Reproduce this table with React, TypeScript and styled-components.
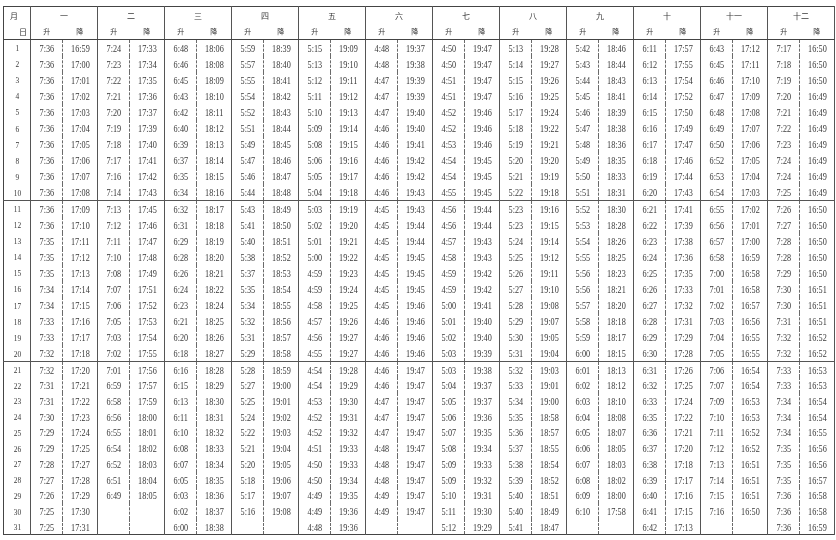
import React from "react";
import styled, { createGlobalStyle } from "styled-components";

const Global = createGlobalStyle`
  html, body { margin: 0; padding: 0; background: #fff; }
`;

const MONTHS = ["一", "二", "三", "四", "五", "六", "七", "八", "九", "十", "十一", "十二"];

const RISE: string[] = [
  "7:36 7:36 7:36 7:36 7:36 7:36 7:36 7:36 7:36 7:36 7:36 7:36 7:35 7:35 7:35 7:34 7:34 7:33 7:33 7:32 7:32 7:31 7:31 7:30 7:29 7:29 7:28 7:27 7:26 7:25 7:25",
  "7:24 7:23 7:22 7:21 7:20 7:19 7:18 7:17 7:16 7:14 7:13 7:12 7:11 7:10 7:08 7:07 7:06 7:05 7:03 7:02 7:01 6:59 6:58 6:56 6:55 6:54 6:52 6:51 6:49",
  "6:48 6:46 6:45 6:43 6:42 6:40 6:39 6:37 6:35 6:34 6:32 6:31 6:29 6:28 6:26 6:24 6:23 6:21 6:20 6:18 6:16 6:15 6:13 6:11 6:10 6:08 6:07 6:05 6:03 6:02 6:00",
  "5:59 5:57 5:55 5:54 5:52 5:51 5:49 5:47 5:46 5:44 5:43 5:41 5:40 5:38 5:37 5:35 5:34 5:32 5:31 5:29 5:28 5:27 5:25 5:24 5:22 5:21 5:20 5:18 5:17 5:16",
  "5:15 5:13 5:12 5:11 5:10 5:09 5:08 5:06 5:05 5:04 5:03 5:02 5:01 5:00 4:59 4:59 4:58 4:57 4:56 4:55 4:54 4:54 4:53 4:52 4:52 4:51 4:50 4:50 4:49 4:49 4:48",
  "4:48 4:48 4:47 4:47 4:47 4:46 4:46 4:46 4:46 4:46 4:45 4:45 4:45 4:45 4:45 4:45 4:45 4:46 4:46 4:46 4:46 4:46 4:47 4:47 4:47 4:48 4:48 4:48 4:49 4:49",
  "4:50 4:50 4:51 4:51 4:52 4:52 4:53 4:54 4:54 4:55 4:56 4:56 4:57 4:58 4:59 4:59 5:00 5:01 5:02 5:03 5:03 5:04 5:05 5:06 5:07 5:08 5:09 5:09 5:10 5:11 5:12",
  "5:13 5:14 5:15 5:16 5:17 5:18 5:19 5:20 5:21 5:22 5:23 5:23 5:24 5:25 5:26 5:27 5:28 5:29 5:30 5:31 5:32 5:33 5:34 5:35 5:36 5:37 5:38 5:39 5:40 5:40 5:41",
  "5:42 5:43 5:44 5:45 5:46 5:47 5:48 5:49 5:50 5:51 5:52 5:53 5:54 5:55 5:56 5:56 5:57 5:58 5:59 6:00 6:01 6:02 6:03 6:04 6:05 6:06 6:07 6:08 6:09 6:10",
  "6:11 6:12 6:13 6:14 6:15 6:16 6:17 6:18 6:19 6:20 6:21 6:22 6:23 6:24 6:25 6:26 6:27 6:28 6:29 6:30 6:31 6:32 6:33 6:35 6:36 6:37 6:38 6:39 6:40 6:41 6:42",
  "6:43 6:45 6:46 6:47 6:48 6:49 6:50 6:52 6:53 6:54 6:55 6:56 6:57 6:58 7:00 7:01 7:02 7:03 7:04 7:05 7:06 7:07 7:09 7:10 7:11 7:12 7:13 7:14 7:15 7:16",
  "7:17 7:18 7:19 7:20 7:21 7:22 7:23 7:24 7:24 7:25 7:26 7:27 7:28 7:28 7:29 7:30 7:30 7:31 7:32 7:32 7:33 7:33 7:34 7:34 7:34 7:35 7:35 7:35 7:36 7:36 7:36",
];

const SET: string[] = [
  "16:59 17:00 17:01 17:02 17:03 17:04 17:05 17:06 17:07 17:08 17:09 17:10 17:11 17:12 17:13 17:14 17:15 17:16 17:17 17:18 17:20 17:21 17:22 17:23 17:24 17:25 17:27 17:28 17:29 17:30 17:31",
  "17:33 17:34 17:35 17:36 17:37 17:39 17:40 17:41 17:42 17:43 17:45 17:46 17:47 17:48 17:49 17:51 17:52 17:53 17:54 17:55 17:56 17:57 17:59 18:00 18:01 18:02 18:03 18:04 18:05",
  "18:06 18:08 18:09 18:10 18:11 18:12 18:13 18:14 18:15 18:16 18:17 18:18 18:19 18:20 18:21 18:22 18:24 18:25 18:26 18:27 18:28 18:29 18:30 18:31 18:32 18:33 18:34 18:35 18:36 18:37 18:38",
  "18:39 18:40 18:41 18:42 18:43 18:44 18:45 18:46 18:47 18:48 18:49 18:50 18:51 18:52 18:53 18:54 18:55 18:56 18:57 18:58 18:59 19:00 19:01 19:02 19:03 19:04 19:05 19:06 19:07 19:08",
  "19:09 19:10 19:11 19:12 19:13 19:14 19:15 19:16 19:17 19:18 19:19 19:20 19:21 19:22 19:23 19:24 19:25 19:26 19:27 19:27 19:28 19:29 19:30 19:31 19:32 19:33 19:33 19:34 19:35 19:36 19:36",
  "19:37 19:38 19:39 19:39 19:40 19:40 19:41 19:42 19:42 19:43 19:43 19:44 19:44 19:45 19:45 19:45 19:46 19:46 19:46 19:46 19:47 19:47 19:47 19:47 19:47 19:47 19:47 19:47 19:47 19:47",
  "19:47 19:47 19:47 19:47 19:46 19:46 19:46 19:45 19:45 19:45 19:44 19:44 19:43 19:43 19:42 19:42 19:41 19:40 19:40 19:39 19:38 19:37 19:37 19:36 19:35 19:34 19:33 19:32 19:31 19:30 19:29",
  "19:28 19:27 19:26 19:25 19:24 19:22 19:21 19:20 19:19 19:18 19:16 19:15 19:14 19:12 19:11 19:10 19:08 19:07 19:05 19:04 19:03 19:01 19:00 18:58 18:57 18:55 18:54 18:52 18:51 18:49 18:47",
  "18:46 18:44 18:43 18:41 18:39 18:38 18:36 18:35 18:33 18:31 18:30 18:28 18:26 18:25 18:23 18:21 18:20 18:18 18:17 18:15 18:13 18:12 18:10 18:08 18:07 18:05 18:03 18:02 18:00 17:58",
  "17:57 17:55 17:54 17:52 17:50 17:49 17:47 17:46 17:44 17:43 17:41 17:39 17:38 17:36 17:35 17:33 17:32 17:31 17:29 17:28 17:26 17:25 17:24 17:22 17:21 17:20 17:18 17:17 17:16 17:15 17:13",
  "17:12 17:11 17:10 17:09 17:08 17:07 17:06 17:05 17:04 17:03 17:02 17:01 17:00 16:59 16:58 16:58 16:57 16:56 16:55 16:55 16:54 16:54 16:53 16:53 16:52 16:52 16:51 16:51 16:51 16:50",
  "16:50 16:50 16:50 16:49 16:49 16:49 16:49 16:49 16:49 16:49 16:50 16:50 16:50 16:50 16:50 16:51 16:51 16:51 16:52 16:52 16:53 16:53 16:54 16:54 16:55 16:56 16:56 16:57 16:58 16:58 16:59",
];

const riseData = RISE.map((s) => s.split(" "));
const setData = SET.map((s) => s.split(" "));

const LINE = "#555";
const DASH = "#6a6a6a";

const Page = styled.div`
  padding: 6px 0 0 3px;
`;

const Table = styled.table`
  border-collapse: collapse;
  table-layout: fixed;
  width: 831px;
  border: 1px solid #444;
  color: #383838;
  background: #fff;
  filter: grayscale(1);
  font-family: "Liberation Serif", "Noto Sans CJK SC", serif;
`;

const Col = styled.col<{ $w: number }>`
  width: ${(p) => p.$w}px;
`;

const HeadRow = styled.tr`
  height: 16.5px;
`;

const CornerTop = styled.th`
  padding: 0 0 0 6px;
  text-align: left;
  font-weight: normal;
  font-size: 8px;
  font-family: "Noto Sans CJK SC", sans-serif;
  border-right: 1px solid ${LINE};
  vertical-align: middle;
`;

const CornerBottom = styled.th`
  padding: 0 3px 0 0;
  text-align: right;
  font-weight: normal;
  font-size: 8px;
  font-family: "Noto Sans CJK SC", sans-serif;
  border-right: 1px solid ${LINE};
  border-bottom: 1px solid #444;
  vertical-align: middle;
`;

const MonthHead = styled.th`
  padding: 0;
  text-align: center;
  font-weight: normal;
  font-size: 8px;
  font-family: "Noto Sans CJK SC", sans-serif;
  border-right: 1px solid ${LINE};
  vertical-align: middle;
`;

const SubHead = styled.th<{ $end?: boolean }>`
  padding: 0;
  text-align: center;
  font-weight: normal;
  font-size: 7px;
  font-family: "Noto Sans CJK SC", sans-serif;
  border-bottom: 1px solid #444;
  border-right: ${(p) => (p.$end ? `1px solid ${LINE}` : "none")};
  vertical-align: middle;
`;

const Row = styled.tr<{ $sep: boolean; $h: number }>`
  height: ${(p) => p.$h}px;
  border-bottom: ${(p) => (p.$sep ? `1px solid ${LINE}` : "none")};
`;

const DayCell = styled.td`
  padding: 2px 0 0 0;
  text-align: center;
  font-size: 9px;
  line-height: 1;
  border-right: 1px solid ${LINE};
`;

const TimeCell = styled.td<{ $rise?: boolean }>`
  padding: 2px 0 0 0;
  text-align: center;
  font-size: 10px;
  line-height: 1;
  border-right: ${(p) => (p.$rise ? `1px dashed ${DASH}` : `1px solid ${LINE}`)};
`;

const Num = styled.span`
  display: inline-block;
  transform: scaleX(0.82);
`;

export default function App() {
  const days = Array.from({ length: 31 }, (_, i) => i);
  return (
    <Page>
      <Global />
      <Table>
        <colgroup>
          <Col $w={27} />
          {MONTHS.map((m) => (
            <React.Fragment key={m}>
              <Col $w={32} />
              <Col $w={35} />
            </React.Fragment>
          ))}
        </colgroup>
        <thead>
          <HeadRow>
            <CornerTop>月</CornerTop>
            {MONTHS.map((m) => (
              <MonthHead key={m} colSpan={2}>
                {m}
              </MonthHead>
            ))}
          </HeadRow>
          <HeadRow>
            <CornerBottom>日</CornerBottom>
            {MONTHS.map((m) => (
              <React.Fragment key={m}>
                <SubHead>升</SubHead>
                <SubHead $end>降</SubHead>
              </React.Fragment>
            ))}
          </HeadRow>
        </thead>
        <tbody>
          {days.map((d) => (
            <Row key={d} $sep={d === 9 || d === 19} $h={d >= 20 ? 15.75 : 16.1}>
              <DayCell>
                <Num>{d + 1}</Num>
              </DayCell>
              {MONTHS.map((m, mi) => (
                <React.Fragment key={m}>
                  <TimeCell $rise>
                    <Num>{riseData[mi][d] ?? ""}</Num>
                  </TimeCell>
                  <TimeCell>
                    <Num>{setData[mi][d] ?? ""}</Num>
                  </TimeCell>
                </React.Fragment>
              ))}
            </Row>
          ))}
        </tbody>
      </Table>
    </Page>
  );
}
